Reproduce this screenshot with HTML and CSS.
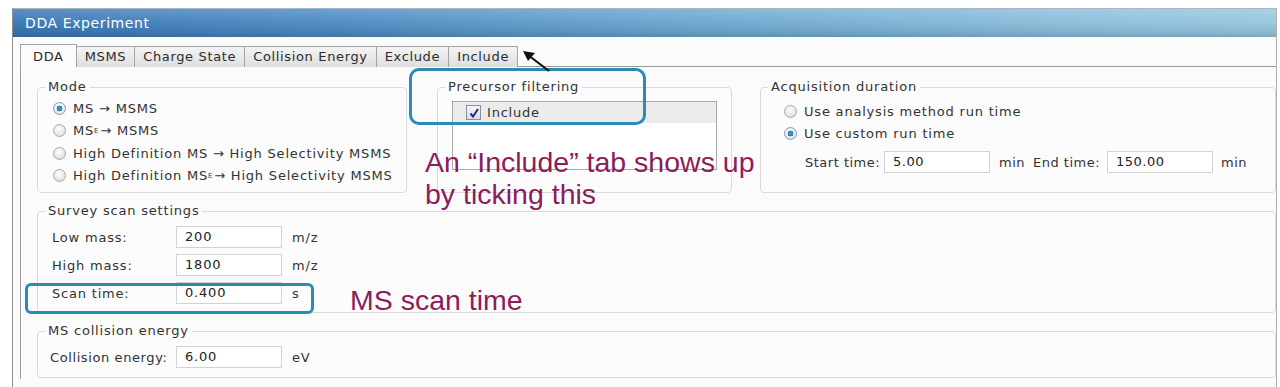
FILE: index.html
```html
<!DOCTYPE html>
<html>
<head>
<meta charset="utf-8">
<link rel="stylesheet" href="styles.css">
</head>
<body>
<div class="window">
  <div class="titlebar">DDA Experiment</div>
  <div class="client">
    <div class="tabs">
      <div class="tab active">DDA</div>
      <div class="tab">MSMS</div>
      <div class="tab">Charge State</div>
      <div class="tab">Collision Energy</div>
      <div class="tab">Exclude</div>
      <div class="tab">Include</div>
    </div>
    <div class="panel">
      <div class="toprow">
        <fieldset class="group mode">
          <legend>Mode</legend>
          <div class="gbody">
            <div class="opt"><span class="radio on"></span>MS → MSMS</div>
            <div class="opt"><span class="radio"></span>MS<sup>E</sup> → MSMS</div>
            <div class="opt"><span class="radio"></span>High Definition MS → High Selectivity MSMS</div>
            <div class="opt"><span class="radio"></span>High Definition MS<sup>E</sup> → High Selectivity MSMS</div>
          </div>
        </fieldset>
        <fieldset class="group precursor">
          <legend>Precursor filtering</legend>
          <div class="gbody">
            <div class="listbox">
              <div class="listrow"><span class="check"><svg width="12" height="12" viewBox="0 0 12 12"><path d="M2.5 6.5 L5 9.5 L10 2" fill="none" stroke="#1d2f80" stroke-width="2"/></svg></span>Include</div>
            </div>
          </div>
        </fieldset>
        <fieldset class="group acq">
          <legend>Acquisition duration</legend>
          <div class="gbody">
            <div class="opt"><span class="radio"></span>Use analysis method run time</div>
            <div class="opt"><span class="radio on"></span>Use custom run time</div>
            <div class="timerow">
              <span class="tlabel start">Start time:</span>
              <span class="field">5.00</span>
              <span class="unit">min</span>
              <span class="tlabel end">End time:</span>
              <span class="field">150.00</span>
              <span class="unit">min</span>
            </div>
          </div>
        </fieldset>
      </div>
      <fieldset class="group survey">
        <legend>Survey scan settings</legend>
        <div class="gbody">
          <div class="frow"><span class="flabel">Low mass:</span><span class="field">200</span><span class="unit">m/z</span></div>
          <div class="frow"><span class="flabel">High mass:</span><span class="field">1800</span><span class="unit">m/z</span></div>
          <div class="frow"><span class="flabel">Scan time:</span><span class="field">0.400</span><span class="unit">s</span></div>
        </div>
      </fieldset>
      <fieldset class="group collision">
        <legend>MS collision energy</legend>
        <div class="gbody">
          <div class="frow"><span class="flabel">Collision energy:</span><span class="field">6.00</span><span class="unit">eV</span></div>
        </div>
      </fieldset>
    </div>
  </div>
</div>

<div class="callout callout-include"></div>
<div class="callout callout-scan"></div>
<svg class="arrow" width="40" height="30" viewBox="0 0 40 30">
  <line x1="34" y1="25" x2="13" y2="9" stroke="#111" stroke-width="2.2"/>
  <polygon points="8,5 20,7 13,15" fill="#111"/>
</svg>
<div class="note note-include">An “Include” tab shows up<br>by ticking this</div>
<div class="note note-scan">MS scan time</div>
</body>
</html>
```
FILE: styles.css
```css
* { box-sizing: border-box; }
html, body { margin: 0; padding: 0; background: #ffffff; }
body {
  position: relative;
  width: 1280px;
  height: 387px;
  overflow: hidden;
  padding: 8px 3px 0 12px;
  font-family: "DejaVu Sans", "Open Sans", sans-serif;
  font-size: 13px;
  letter-spacing: 0.8px;
  color: #333;
}
.window {
  border-left: 1px solid #8e8e8e;
  border-right: 1px solid #b0b0b0;
  height: 379px;
  background: #fbfbfb;
}
.titlebar {
  height: 29px;
  padding-left: 12px;
  line-height: 28px;
  font-size: 14px;
  letter-spacing: 0.6px;
  color: #fff;
  border-top: 1px solid #a9b7c2;
  background:
    linear-gradient(to bottom, rgba(255,255,255,0.18) 0%, rgba(255,255,255,0.04) 45%, rgba(0,0,0,0.06) 80%, rgba(0,0,0,0.16) 100%),
    linear-gradient(to right, #3a78b5 0%, #4c8cc2 25%, #6ea8d0 55%, #8cc0dc 85%, #98c6df 100%);
}
.client {
  padding: 8px 0 0 7px;
}
.tabs {
  display: flex;
  height: 22px;
  border-bottom: 1px solid #9a9a9a;
}
.tab {
  height: 21px;
  margin-top: 1px;
  padding: 0 8px;
  line-height: 19px;
  letter-spacing: 0.65px;
  color: #2d2d2d;
  border: 1px solid #a4a4a4;
  border-bottom: none;
  border-left: none;
  background: linear-gradient(to bottom, #f4f4f4, #dedede);
}
.tab:first-child { border-left: 1px solid #a4a4a4; }
.tab.active {
  height: 23px;
  margin-top: -1px;
  margin-bottom: -1px;
  line-height: 23px;
  padding: 0 12px;
  background: #fbfbfb;
}
.panel {
  border-left: 1px solid #9a9a9a;
  height: 312px;
  padding: 12px 0 0 16px;
}
.toprow {
  display: flex;
  align-items: stretch;
}
.group {
  margin: 0;
  padding: 0;
  min-width: 0;
  border: 1px solid #dadada;
  border-radius: 4px;
  background: #fcfcfc;
}
legend {
  margin-left: 7px;
  padding: 0 3px;
  line-height: 16px;
  color: #333;
}
.mode {
  width: 370px;
  height: 114px;
}
.mode .gbody { padding: 2px 0 0 15px; }
.precursor {
  width: 295px;
  height: 114px;
  margin-left: 30px;
}
.precursor .gbody { padding: 6px 14px 0 14px; }
.acq {
  flex: 1;
  height: 114px;
  margin-left: 28px;
}
.acq .gbody { padding: 5px 0 0 23px; }
.opt {
  display: flex;
  align-items: center;
  height: 22.5px;
  white-space: nowrap;
}
.opt sup {
  font-size: 7px;
  vertical-align: 5px;
  line-height: 0;
  margin-right: 1px;
}
.radio {
  flex: none;
  width: 13px;
  height: 13px;
  margin-right: 7px;
  border-radius: 50%;
  border: 1px solid #a9a9a9;
  background: radial-gradient(circle at 45% 35%, #fdfdfd 0%, #e6e6e6 60%, #cfcfcf 100%);
}
.radio.on {
  border-color: #7f9bb0;
  background:
    radial-gradient(circle at 50% 50%, #4a9ccc 0%, #2f7fae 30%, #2f7fae 36%, transparent 40%),
    radial-gradient(circle at 45% 35%, #ffffff 0%, #dfe7ee 70%, #c5d0d8 100%);
}
.listbox {
  height: 69px;
  border: 1px solid #a9a9a9;
  background: #ffffff;
}
.listrow {
  display: flex;
  align-items: center;
  height: 21px;
  padding-left: 13px;
  background: #ebebeb;
}
.check {
  display: flex;
  align-items: center;
  justify-content: center;
  width: 15px;
  height: 15px;
  margin-right: 6px;
  border: 1px solid #8a8f9e;
  background: linear-gradient(to bottom, #f5f5f8, #dcdde6);
}
.timerow {
  display: flex;
  align-items: center;
  height: 22px;
  margin-top: 6px;
  padding-left: 21px;
  letter-spacing: 0.5px;
}
.tlabel.start { width: 79px; }
.tlabel.end { width: 74px; }
.field {
  display: inline-block;
  width: 106px;
  height: 22px;
  line-height: 20px;
  padding-left: 8px;
  border: 1px solid #d2d2d2;
  background: #ffffff;
  color: #222;
}
.timerow .unit { width: 43px; padding-left: 9px; }
.timerow .unit:last-child { padding-left: 8px; }
.survey {
  margin-top: 10px;
  height: 110px;
}
.survey .gbody { padding: 4px 0 0 14px; }
.collision {
  margin-top: 10px;
  height: 55px;
}
.collision .gbody { padding: 7px 0 0 12px; }
.frow {
  display: flex;
  align-items: center;
  height: 28px;
}
.collision .frow { height: 22px; }
.flabel { width: 124px; }
.collision .flabel { width: 126px; letter-spacing: 0.6px; }
.frow .unit { padding-left: 10px; }

.callout {
  position: absolute;
  border: 3px solid #2b8bb3;
}
.callout-include {
  left: 409px;
  top: 68px;
  width: 237px;
  height: 57px;
  border-radius: 10px;
}
.callout-scan {
  left: 25px;
  top: 283px;
  width: 289px;
  height: 31px;
  border-radius: 6px;
}
.arrow {
  position: absolute;
  left: 515px;
  top: 46px;
}
.note {
  position: absolute;
  font-family: "Liberation Sans", Arial, sans-serif;
  font-size: 28.5px;
  letter-spacing: 0;
  line-height: 32px;
  color: #8c1d5c;
  white-space: nowrap;
}
.note-include {
  left: 425px;
  top: 146px;
}
.note-scan {
  left: 350px;
  top: 284px;
}
```
